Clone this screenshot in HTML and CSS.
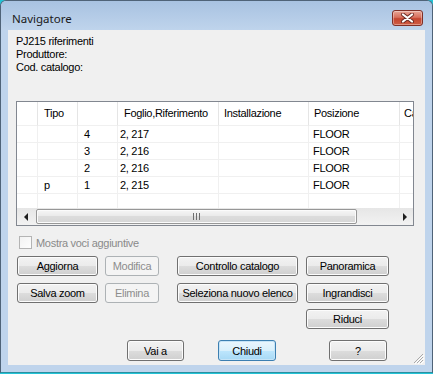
FILE: index.html
```html
<!DOCTYPE html>
<html lang="it">
<head>
  <meta charset="UTF-8" />
  <title>Navigatore</title>
  <link rel="stylesheet" href="styles.css">
</head>
<body>

  <div class="window">
    <div class="titlebar">
      <span class="title">Navigatore</span>
      <button class="close">
        <svg width="15" height="10" viewBox="0 0 15 10">
          <path d="M3 1.5 L12 8.5 M12 1.5 L3 8.5" stroke="#6b2b24" stroke-width="4" stroke-linecap="round" fill="none"/>
          <path d="M3 1.5 L12 8.5 M12 1.5 L3 8.5" stroke="#ffffff" stroke-width="2.2" stroke-linecap="round" fill="none"/>
        </svg>
      </button>
    </div>

    <div class="client">
      <div class="info">
        <div class="info-name">PJ215 riferimenti</div>
        <div class="info-line">Produttore:</div>
        <div class="info-line">Cod. catalogo:</div>
      </div>

      <div class="list">
        <div class="list-body">
          <div class="row head">
            <div class="cell c0"></div>
            <div class="cell c1">Tipo</div>
            <div class="cell c2"></div>
            <div class="cell c3">Foglio,Riferimento</div>
            <div class="cell c4">Installazione</div>
            <div class="cell c5">Posizione</div>
            <div class="cell c6">Catalogo</div>
          </div>
          <div class="row">
            <div class="cell c0"></div>
            <div class="cell c1"></div>
            <div class="cell c2">4</div>
            <div class="cell c3">2, 217</div>
            <div class="cell c4"></div>
            <div class="cell c5">FLOOR</div>
            <div class="cell c6"></div>
          </div>
          <div class="row">
            <div class="cell c0"></div>
            <div class="cell c1"></div>
            <div class="cell c2">3</div>
            <div class="cell c3">2, 216</div>
            <div class="cell c4"></div>
            <div class="cell c5">FLOOR</div>
            <div class="cell c6"></div>
          </div>
          <div class="row">
            <div class="cell c0"></div>
            <div class="cell c1"></div>
            <div class="cell c2">2</div>
            <div class="cell c3">2, 216</div>
            <div class="cell c4"></div>
            <div class="cell c5">FLOOR</div>
            <div class="cell c6"></div>
          </div>
          <div class="row">
            <div class="cell c0"></div>
            <div class="cell c1">p</div>
            <div class="cell c2">1</div>
            <div class="cell c3">2, 215</div>
            <div class="cell c4"></div>
            <div class="cell c5">FLOOR</div>
            <div class="cell c6"></div>
          </div>
          <div class="row">
            <div class="cell c0"></div>
            <div class="cell c1"></div>
            <div class="cell c2"></div>
            <div class="cell c3"></div>
            <div class="cell c4"></div>
            <div class="cell c5"></div>
            <div class="cell c6"></div>
          </div>
        </div>
        <div class="hscroll">
          <div class="arrow"><span class="tri-left"></span></div>
          <div class="track">
            <div class="thumb">
              <svg width="7" height="7" viewBox="0 0 7 7">
                <rect x="0" y="0" width="1" height="7" fill="#6f6f6f"/>
                <rect x="3" y="0" width="1" height="7" fill="#6f6f6f"/>
                <rect x="6" y="0" width="1" height="7" fill="#6f6f6f"/>
              </svg>
            </div>
          </div>
          <div class="arrow"><span class="tri-right"></span></div>
        </div>
      </div>

      <label class="check">
        <span class="box"></span>
        Mostra voci aggiuntive
      </label>

      <div class="buttons">
        <button class="btn w1">Aggiorna</button>
        <button class="btn w2" disabled>Modifica</button>
        <button class="btn w3">Controllo catalogo</button>
        <button class="btn w4">Panoramica</button>
        <button class="btn w1">Salva zoom</button>
        <button class="btn w2" disabled>Elimina</button>
        <button class="btn w3">Seleziona nuovo elenco</button>
        <button class="btn w4">Ingrandisci</button>
        <button class="btn w4 riduci">Riduci</button>
      </div>

      <div class="bottom">
        <button class="btn small vai">Vai a</button>
        <button class="btn small default chiudi">Chiudi</button>
        <button class="btn small help">?</button>
      </div>

      <svg class="grip" width="12" height="12" viewBox="0 0 12 12">
        <path d="M11 2 L2 11 M11 5 L5 11 M11 8 L8 11" stroke="#a9a9a9" stroke-width="1" fill="none"/>
        <path d="M12 3 L3 12 M12 6 L6 12 M12 9 L9 12" stroke="#ffffff" stroke-width="1" fill="none"/>
      </svg>
    </div>
  </div>

</body>
</html>
```

FILE: styles.css
```css
* {
  box-sizing: border-box;
}
body {
  margin: 0;
  background: #22c3d6;
  font-family: "Liberation Sans", Arial, sans-serif;
  font-size: 11px;
  letter-spacing: -0.3px;
  color: #000;
}
.window {
  width: 433px;
  height: 373px;
  border: 1px solid #4f6378;
  border-bottom-color: #2a8fa0;
  border-radius: 6px 6px 0 0;
  background: #bfd4ec;
  padding: 0 7px 7px;
  display: flex;
  flex-direction: column;
}
.titlebar {
  height: 29px;
  flex: none;
  display: flex;
  align-items: flex-start;
  margin: 0 -7px;
  padding: 0 9px 0 11px;
  background: linear-gradient(#a8c2e1, #bfd4ec);
  border-radius: 5px 5px 0 0;
}
.title {
  font-family: "Noto Sans", "Liberation Sans", sans-serif;
  font-size: 11.5px;
  letter-spacing: 0;
  line-height: 14px;
  margin-top: 11px;
  color: #1a1a1a;
}
.close {
  margin-left: auto;
  margin-top: 9px;
  width: 31px;
  height: 16px;
  padding: 0;
  border: 1px solid #7f2f27;
  border-radius: 3px;
  background: linear-gradient(#e8a596 0%, #d8705d 45%, #c44530 55%, #cf5d44 100%);
  box-shadow: inset 0 0 0 1px rgba(255,255,255,0.35);
  display: flex;
  align-items: center;
  justify-content: center;
}
.client {
  height: 335px;
  flex: none;
  background: #f0f0f0;
  position: relative;
}
.info {
  padding: 4px 0 0 8px;
}
.info-name {
  line-height: 14px;
}
.info-line {
  line-height: 13px;
}

/* list view */
.list {
  margin: 27px 0 0 8px;
  width: 398px;
  height: 125px;
  border: 1px solid #828790;
  background: #fff;
  display: flex;
  flex-direction: column;
}
.list-body {
  flex: 1;
  overflow: hidden;
}
.row {
  display: flex;
  height: 17px;
  line-height: 16px;
  width: 460px;
}
.row.head {
  height: 24px;
  line-height: 23px;
}
.cell {
  flex: none;
  border-right: 1px solid #f0f0f0;
  border-bottom: 1px solid #f0f0f0;
  white-space: nowrap;
  overflow: hidden;
  padding-left: 6px;
}
.head .cell {
  border-right-color: #e5e5e5;
  border-bottom-color: #f0f0f0;
}
.c0 { width: 21px; }
.c1 { width: 40px; }
.c2 { width: 40px; }
.c3 { width: 101px; padding-left: 2px; }
.c4 { width: 90px; padding-left: 5px; }
.c5 { width: 91px; padding-left: 4px; }
.c6 { width: 77px; padding-left: 4px; }
.head .c3 { padding-left: 6px; }
.head .c5 { padding-left: 5px; }

.hscroll {
  height: 17px;
  flex: none;
  display: flex;
  background: linear-gradient(#e6e6e6, #f2f2f2);
}
.arrow {
  width: 17px;
  display: flex;
  align-items: center;
  justify-content: center;
}
.tri-left {
  border-top: 4px solid transparent;
  border-bottom: 4px solid transparent;
  border-right: 4px solid #1e1e1e;
}
.tri-right {
  border-top: 4px solid transparent;
  border-bottom: 4px solid transparent;
  border-left: 4px solid #1e1e1e;
}
.track {
  flex: 1;
  padding: 1px 0;
}
.thumb {
  margin-left: 2px;
  width: 321px;
  height: 15px;
  border: 1px solid #979797;
  border-radius: 2px;
  background: linear-gradient(#f6f6f6, #e9e9e9 50%, #dcdcdc 50%, #d6d6d6);
  box-shadow: inset 0 0 0 1px #fbfbfb;
  display: flex;
  align-items: center;
  justify-content: center;
}

/* checkbox */
.check {
  display: flex;
  align-items: center;
  gap: 4px;
  margin: 10px 0 0 11px;
  height: 13px;
  color: #8a8a8a;
}
.box {
  width: 13px;
  height: 13px;
  border: 1px solid #b4b4b4;
  background: linear-gradient(135deg, #f2f2f2, #fdfdfd);
}

/* buttons */
.btn {
  height: 20px;
  padding: 0;
  border: 1px solid #707070;
  border-radius: 3px;
  background: linear-gradient(#f2f2f2 0%, #ebebeb 50%, #dddddd 50%, #cfcfcf 100%);
  box-shadow: inset 0 0 0 1px #fcfcfc;
  font-family: "Liberation Sans", Arial, sans-serif;
  font-size: 11px;
  letter-spacing: -0.3px;
  color: #000;
  white-space: nowrap;
}
.btn:disabled {
  border-color: #adb2b5;
  background: #f4f4f4;
  box-shadow: none;
  color: #8d8d8d;
}
.buttons {
  margin: 7px 0 0 9px;
  display: grid;
  grid-template-columns: 88px 72px 129px 83px;
  grid-template-rows: 27px 26px 20px;
  align-items: start;
}
.w1 { width: 81px; }
.w2 { width: 54px; }
.w3 { width: 121px; }
.w4 { width: 83px; }
.riduci {
  grid-column: 4;
}
.bottom {
  margin-top: 11px;
  display: flex;
}
.small {
  height: 21px;
}
.vai {
  width: 57px;
  margin-left: 119px;
}
.chiudi {
  width: 58px;
  margin-left: 34px;
}
.help {
  width: 58px;
  margin-left: 53px;
}
.default {
  border-color: #3c7fb1;
  background: linear-gradient(#eaf6fd 0%, #d9f0fc 50%, #bee6fd 50%, #a7d9f5 100%);
  box-shadow: inset 0 0 0 1px #c6e4f7;
}
.grip {
  position: absolute;
  right: 1px;
  bottom: 1px;
}
```
